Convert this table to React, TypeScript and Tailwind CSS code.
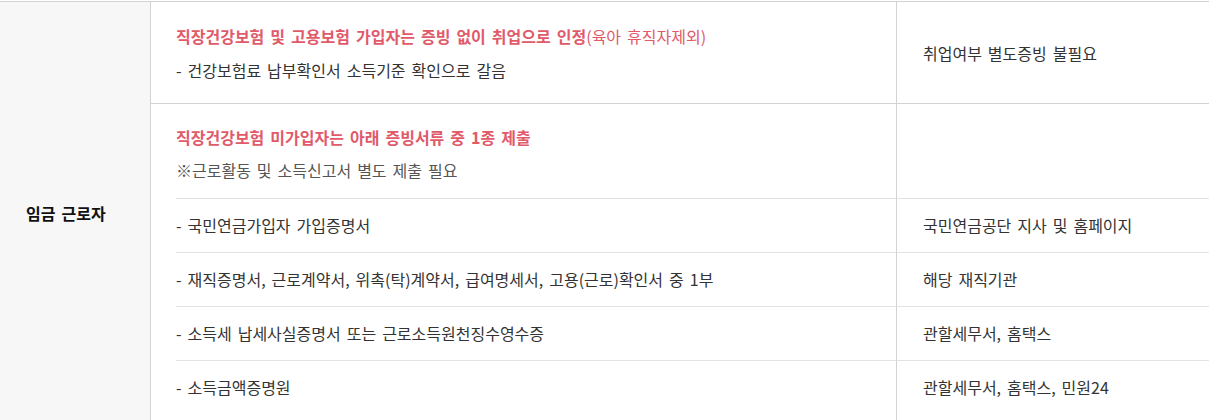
import React from "react";

const subRows: [string, string][] = [
  ["- 국민연금가입자 가입증명서", "국민연금공단 지사 및 홈페이지"],
  ["- 재직증명서, 근로계약서, 위촉(탁)계약서, 급여명세서, 고용(근로)확인서 중 1부", "해당 재직기관"],
  ["- 소득세 납세사실증명서 또는 근로소득원천징수영수증", "관할세무서, 홈택스"],
  ["- 소득금액증명원", "관할세무서, 홈택스, 민원24"],
];

export default function App() {
  return (
    <div
      className="w-[1209px] h-[420px] overflow-hidden bg-white pt-[1px] text-[16px] text-[#333] [word-spacing:2.4px]"
      style={{ fontFamily: "'Noto Sans CJK KR', 'Noto Sans', sans-serif" }}
    >
      <div className="flex border-t border-[#d3d3d3]">
        <div className="w-[151px] shrink-0 bg-[#f7f7f7] border-r border-[#d3d3d3] pl-[26px] pt-[199px]">
          <span className="font-bold text-[#111] leading-[24px]">임금 근로자</span>
        </div>
        <div className="flex-1 flex flex-col">
          {/* Row 1 */}
          <div className="flex h-[101px]">
            <div className="w-[745px] shrink-0 pl-[25px] flex flex-col justify-center gap-[10px]">
              <div className="leading-[24px] text-[#e05a6a]">
                <span className="font-bold">직장건강보험 및 고용보험 가입자는 증빙 없이 취업으로 인정</span>
                <span>(육아 휴직자제외)</span>
              </div>
              <div className="leading-[24px]">- 건강보험료 납부확인서 소득기준 확인으로 갈음</div>
            </div>
            <div className="flex-1 border-l border-[#d3d3d3] pl-[26px] flex items-center leading-[24px]">
              취업여부 별도증빙 불필요
            </div>
          </div>
          {/* Row 2 */}
          <div className="flex h-[95px] border-t border-[#d3d3d3]">
            <div className="w-[745px] shrink-0 pl-[25px] pt-[21px] flex flex-col gap-[9px]">
              <div className="leading-[24px] font-bold text-[#e05a6a]">
                직장건강보험 미가입자는 아래 증빙서류 중 1종 제출
              </div>
              <div className="leading-[24px] text-[#555]">※근로활동 및 소득신고서 별도 제출 필요</div>
            </div>
            <div className="flex-1 border-l border-[#d3d3d3]" />
          </div>
          {subRows.map(([a, b], i) => (
            <div key={a} className={i === subRows.length - 1 ? "flex h-[70px]" : "flex h-[54px]"}>
              <div className="w-[745px] shrink-0 pl-[25px] flex">
                <div className="flex-1 border-t border-[#e3e3e3] pt-[14px] leading-[24px]">{a}</div>
              </div>
              <div className="flex-1 border-l border-t border-l-[#d3d3d3] border-t-[#e3e3e3] pl-[26px] pt-[14px] leading-[24px]">
                {b}
              </div>
            </div>
          ))}
        </div>
      </div>
    </div>
  );
}
